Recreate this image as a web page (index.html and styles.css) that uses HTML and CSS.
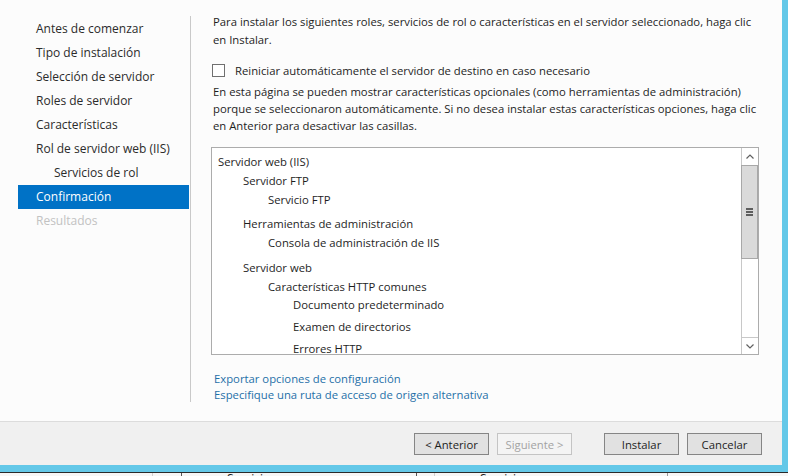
FILE: index.html
```html
<!DOCTYPE html>
<html lang="es">
<head>
<meta charset="utf-8">
<title>Confirmación</title>
<link rel="stylesheet" href="styles.css">
</head>
<body>
<div class="screen">
  <div class="top">
    <div class="dialog">
      <div class="main">
        <nav class="nav">
          <div class="nav-item">Antes de comenzar</div>
          <div class="nav-item">Tipo de instalación</div>
          <div class="nav-item">Selección de servidor</div>
          <div class="nav-item">Roles de servidor</div>
          <div class="nav-item">Características</div>
          <div class="nav-item">Rol de servidor web (IIS)</div>
          <div class="nav-item sub">Servicios de rol</div>
          <div class="nav-item active">Confirmación</div>
          <div class="nav-item disabled">Resultados</div>
        </nav>
        <div class="vsep"></div>
        <section class="content">
          <p class="intro">Para instalar los siguientes roles, servicios de rol o características en el servidor seleccionado, haga clic<br>en Instalar.</p>
          <label class="check"><span class="box"></span><span>Reiniciar automáticamente el servidor de destino en caso necesario</span></label>
          <p class="note">En esta página se pueden mostrar características opcionales (como herramientas de administración)<br>porque se seleccionaron automáticamente. Si no desea instalar estas características opciones, haga clic<br>en Anterior para desactivar las casillas.</p>
          <div class="listbox">
            <div class="tree">
              <div class="row">Servidor web (IIS)</div>
              <div class="row l1">Servidor FTP</div>
              <div class="row l2">Servicio FTP</div>
              <div class="row l1 g5">Herramientas de administración</div>
              <div class="row l2">Consola de administración de IIS</div>
              <div class="row l1 g6">Servidor web</div>
              <div class="row l2">Características HTTP comunes</div>
              <div class="row l3 gm1">Documento predeterminado</div>
              <div class="row l3 g3">Examen de directorios</div>
              <div class="row l3 g3">Errores HTTP</div>
            </div>
            <div class="scrollbar">
              <div class="sb-btn up">
                <svg width="8" height="5" viewBox="0 0 8 5"><polyline points="0.5,4.5 4,1 7.5,4.5" fill="none" stroke="#606060" stroke-width="1.2"/></svg>
              </div>
              <div class="sb-thumb">
                <span class="grip"></span><span class="grip"></span><span class="grip"></span>
              </div>
              <div class="sb-track"></div>
              <div class="sb-btn down">
                <svg width="8" height="5" viewBox="0 0 8 5"><polyline points="0.5,0.5 4,4 7.5,0.5" fill="none" stroke="#606060" stroke-width="1.2"/></svg>
              </div>
            </div>
          </div>
          <div class="links">
            <a href="#">Exportar opciones de configuración</a>
            <a href="#">Especifique una ruta de acceso de origen alternativa</a>
          </div>
        </section>
      </div>
      <div class="footer">
        <button class="btn">&lt; Anterior</button>
        <button class="btn disabled-btn">Siguiente &gt;</button>
        <button class="btn">Instalar</button>
        <button class="btn">Cancelar</button>
      </div>
    </div>
    <div class="edge"></div>
  </div>
  <div class="bluebar"></div>
  <div class="taskstrip">
    <div class="cell c1"></div>
    <div class="cell c2"></div>
    <div class="cell c3"><span class="tt">Servicios</span></div>
    <div class="cell c4"></div>
    <div class="cell c5"><span class="tt">Servicios</span></div>
    <div class="cell c6"></div>
  </div>
</div>
</body>
</html>
```
FILE: styles.css
```css
* {
  box-sizing: border-box;
  margin: 0;
  padding: 0;
}

html, body {
  width: 788px;
  height: 476px;
  overflow: hidden;
}

body {
  font-family: "Open Sans", "Noto Sans", sans-serif;
  font-size: 11.3px;
  color: #1e1e1e;
  background: #fcfcfc;
}

.screen {
  display: flex;
  flex-direction: column;
  width: 788px;
  height: 476px;
}

.top {
  display: flex;
  height: 465px;
}

.dialog {
  width: 782px;
  display: flex;
  flex-direction: column;
  background: #fcfcfc;
}

.edge {
  width: 6px;
  background: #64c8e8;
}

.main {
  display: flex;
  height: 422px;
  border-bottom: 1px solid #dcdcdc;
}

.nav {
  width: 171px;
  margin-left: 18px;
  padding-top: 17px;
}

.nav-item {
  height: 24px;
  line-height: 24px;
  padding-left: 18px;
  font-size: 12px;
  color: #2b2b2b;
  white-space: nowrap;
}

.nav-item.sub {
  padding-left: 36px;
}

.nav-item.active {
  background: #0072c6;
  color: #ffffff;
}

.nav-item.disabled {
  color: #c2c2c2;
}

.vsep {
  width: 1px;
  height: 386px;
  margin: 16px 0 0 1px;
  background: #c9c9c9;
}

.content {
  flex: 1;
  padding: 13px 0 0 20px;
}

.intro {
  line-height: 18px;
  padding-left: 2px;
  white-space: nowrap;
}

.check {
  display: flex;
  align-items: center;
  height: 18px;
  margin-top: 12px;
  padding-left: 1px;
  white-space: nowrap;
}

.box {
  width: 13px;
  height: 13px;
  border: 1px solid #707070;
  background: #ffffff;
  margin-right: 10px;
}

.note {
  margin-top: 4px;
  line-height: 17px;
  padding-left: 2px;
  white-space: nowrap;
}

.listbox {
  margin-top: 13px;
  width: 548px;
  height: 208px;
  border: 1px solid #acacac;
  background: #ffffff;
  display: flex;
}

.tree {
  flex: 1;
  padding: 4px 0 0 6px;
  overflow: hidden;
}

.row {
  height: 19px;
  line-height: 19px;
  white-space: nowrap;
}

.l1 { padding-left: 25px; }
.l2 { padding-left: 50px; }
.l3 { padding-left: 75px; }
.g5 { margin-top: 5px; }
.g6 { margin-top: 6px; }
.g3 { margin-top: 3px; }
.gm1 { margin-top: -1px; }

.scrollbar {
  width: 17px;
  display: flex;
  flex-direction: column;
}

.sb-btn {
  height: 17px;
  display: flex;
  align-items: center;
  justify-content: center;
  border-left: 1px solid #c8c8c8;
  background: #ffffff;
}

.sb-btn.down {
  border-top: 1px solid #c8c8c8;
}

.sb-thumb {
  height: 94px;
  background: #dadada;
  border: 1px solid #a8a8a8;
  display: flex;
  flex-direction: column;
  align-items: center;
  justify-content: center;
  gap: 1px;
}

.grip {
  display: block;
  width: 7px;
  height: 2px;
  background: #5e5e5e;
}

.sb-track {
  flex: 1;
  border-left: 1px solid #c8c8c8;
}

.links {
  margin-top: 16px;
  padding-left: 3px;
}

.links a {
  display: block;
  line-height: 16px;
  color: #1f70a8;
  text-decoration: none;
  white-space: nowrap;
}

.footer {
  flex: 1;
  background: #f0f0f0;
  display: flex;
  justify-content: flex-end;
  align-items: flex-start;
  gap: 8px;
  padding: 11px 20px 0 0;
}

.btn {
  width: 75px;
  height: 22px;
  border: 1px solid #858585;
  background: #e1e1e1;
  font-family: inherit;
  font-size: 11.3px;
  color: #1e1e1e;
}

.btn.disabled-btn {
  border-color: #c4c4c4;
  background: #f4f4f4;
  color: #a3a3a3;
  margin-right: 24px;
}

.bluebar {
  height: 7px;
  background: #64c8e8;
  border-bottom: 1px solid #2a2a2a;
  box-sizing: content-box;
}

.taskstrip {
  flex: 1;
  display: flex;
  background: #f6f6f6;
  overflow: hidden;
}

.cell {
  height: 3px;
  overflow: hidden;
}

.c1 { width: 153px; border-right: 1px solid #d0d0d0; }
.c2 { width: 29px; border-right: 1px solid #555555; }
.c3 { width: 235px; border-right: 1px solid #555555; padding-left: 45px; }
.c4 { width: 18px; border-right: 1px solid #d0d0d0; }
.c5 { width: 233px; border-right: 1px solid #9a9a9a; padding-left: 45px; }
.c6 { flex: 1; }

.tt {
  display: block;
  font-size: 12px;
  line-height: 12px;
  color: #1e1e1e;
}
```
